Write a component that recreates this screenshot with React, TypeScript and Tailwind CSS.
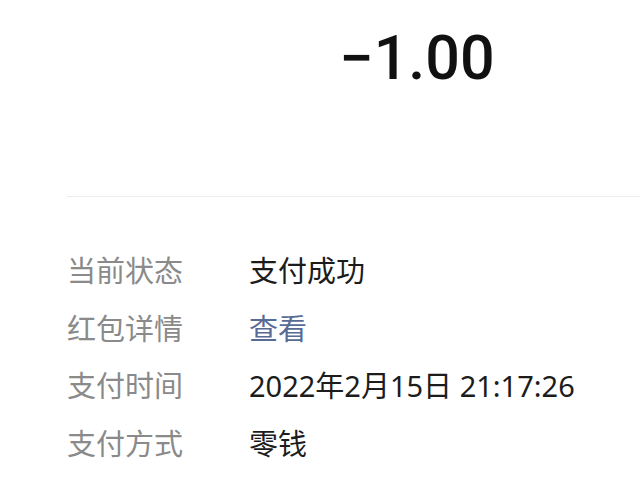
const rows: { label: string; value: string; link?: boolean }[] = [
  { label: "当前状态", value: "支付成功" },
  { label: "红包详情", value: "查看", link: true },
  { label: "支付时间", value: "2022年2月15日 21:17:26" },
  { label: "支付方式", value: "零钱" },
];

export default function App() {
  return (
    <div
      className="h-[485px] w-[640px] overflow-hidden bg-white"
      style={{ fontFamily: '"Noto Sans", "Noto Sans CJK SC", sans-serif' }}
    >
      <div className="pl-[67px]">
        <div className="flex h-[116px] w-[700px] items-center justify-center">
          <span
            className="text-[61px] font-medium leading-none text-[#111]"
            style={{ fontFamily: 'Roboto, "Noto Sans", sans-serif' }}
          >
            −1.00
          </span>
        </div>
        <div className="mt-[80px] h-px w-[700px] bg-[#ececec]" />
        <div className="pt-[45px]">
          {rows.map((r) => (
            <div key={r.label} className="flex h-[57.5px] items-center text-[29px]">
              <span className="w-[182px] shrink-0 text-[#8a8a8a]">{r.label}</span>
              <span className={r.link ? "text-[#576b95]" : "text-[#1c1c1c]"}>
                {r.value}
              </span>
            </div>
          ))}
        </div>
      </div>
    </div>
  );
}
